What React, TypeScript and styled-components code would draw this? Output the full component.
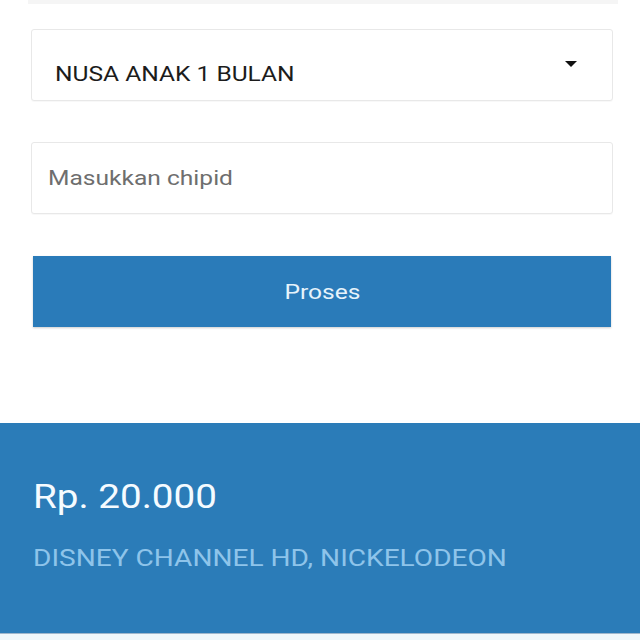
import React from "react";
import styled, { createGlobalStyle } from "styled-components";

const Global = createGlobalStyle`
  html, body { margin: 0; padding: 0; background: #ffffff; }
  body { font-family: Roboto, "Liberation Sans", Arial, sans-serif; }
  * { box-sizing: border-box; }
`;

const Page = styled.div`
  width: 640px;
  height: 640px;
  display: flex;
  flex-direction: column;
  overflow: hidden;
  background: #ffffff;
`;

const PrevEdge = styled.div`
  height: 4px;
  margin: 0 22px 0 28px;
  background: #f5f5f5;
`;

const Form = styled.div`
  display: flex;
  flex-direction: column;
  padding: 25px 27px 0 31px;
`;

const Field = styled.div<{ $top: number }>`
  margin-top: ${(p) => p.$top}px;
  height: 72px;
  border: 1px solid #e8e8e8;
  border-radius: 3px;
  box-shadow: 0 1px 1px rgba(0, 0, 0, 0.03);
  display: flex;
  align-items: center;
  justify-content: space-between;
  background: #fff;
`;

const Wide = styled.span<{ $origin?: string }>`
  display: inline-block;
  transform: scaleX(1.17);
  transform-origin: ${(p) => p.$origin ?? "left"} center;
  white-space: nowrap;
`;

const SelectText = styled(Wide)`
  margin-left: 23px;
  padding-top: 18px;
  font-size: 21px;
  color: #1c1c1c;
`;

const Caret = styled.span`
  width: 0;
  height: 0;
  margin-right: 35px;
  margin-bottom: 2px;
  border-left: 6px solid transparent;
  border-right: 6px solid transparent;
  border-top: 6px solid #111;
`;

const Placeholder = styled(Wide)`
  margin-left: 16px;
  font-size: 21px;
  color: #6e6e6e;
`;

const Button = styled.div`
  margin: 42px 2px 0 2px;
  height: 71px;
  background: #2a7bb9;
  box-shadow: 0 1px 2px rgba(0, 0, 0, 0.2);
  display: flex;
  align-items: center;
  justify-content: center;
  color: #e6f3fb;
  font-size: 21px;
`;

const Panel = styled.div`
  margin-top: 96px;
  height: 210px;
  background: #2b7cb8;
  display: flex;
  flex-direction: column;
  align-items: flex-start;
  padding: 54px 33px 0 33px;
`;

const Price = styled(Wide)`
  font-size: 33px;
  line-height: 40px;
  color: #f5fbff;
`;

const Channels = styled(Wide)`
  margin-top: 27px;
  font-size: 24px;
  line-height: 28px;
  color: #8ec4ea;
`;

const Bottom = styled.div`
  flex: 1;
  background: #eef7fb;
  border-top: 1px solid #9fb7cc;
`;

export default function App() {
  return (
    <Page>
      <Global />
      <PrevEdge />
      <Form>
        <Field $top={0}>
          <SelectText>NUSA ANAK 1 BULAN</SelectText>
          <Caret />
        </Field>
        <Field $top={41}>
          <Placeholder>Masukkan chipid</Placeholder>
        </Field>
        <Button>
          <Wide $origin="center">Proses</Wide>
        </Button>
      </Form>
      <Panel>
        <Price>Rp. 20.000</Price>
        <Channels>DISNEY CHANNEL HD, NICKELODEON</Channels>
      </Panel>
      <Bottom />
    </Page>
  );
}
